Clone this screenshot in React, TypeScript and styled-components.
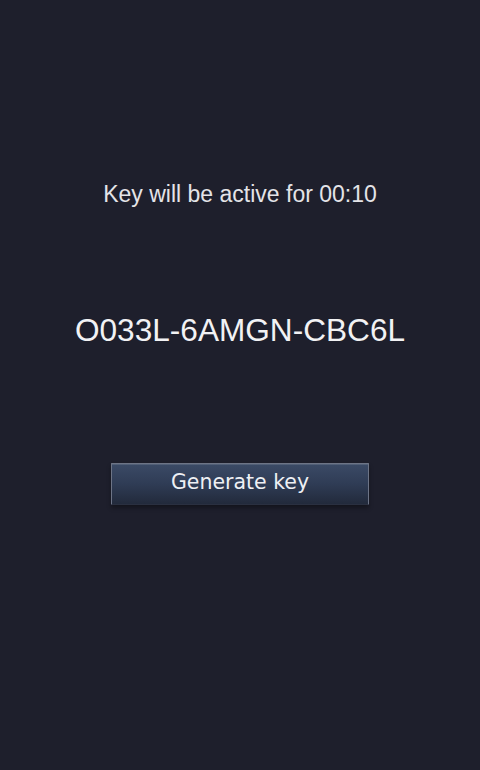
import { useState } from "react";
import styled, { createGlobalStyle } from "styled-components";

const GlobalStyle = createGlobalStyle`
	html, body {
		margin: 0;
		padding: 0;
		background: #1e1f2c;
	}
`;

function randomKey() {
	const chars = "ABCDEFGHIJKLMNOPQRSTUVWXYZ0123456789";
	const part = () =>
		Array.from({ length: 5 }, () => chars[Math.floor(Math.random() * chars.length)]).join("");
	return `${part()}-${part()}-${part()}`;
}

export default function App() {
	const [key, setKey] = useState("O033L-6AMGN-CBC6L");
	const [seconds] = useState(10);

	const mm = String(Math.floor(seconds / 60)).padStart(2, "0");
	const ss = String(seconds % 60).padStart(2, "0");

	return (
		<>
			<GlobalStyle />
			<Screen>
				<Timer>
					Key will be active for {mm}:{ss}
				</Timer>
				<KeyText>{key}</KeyText>
				<GenerateButton onClick={() => setKey(randomKey())}>Generate key</GenerateButton>
			</Screen>
		</>
	);
}

const Screen = styled.div`
	width: 480px;
	height: 770px;
	background: #1e1f2c;
	display: flex;
	flex-direction: column;
	align-items: center;
	padding-top: 180px;
	box-sizing: border-box;
`;

const Timer = styled.div`
	font-family: "Liberation Sans", Arial, sans-serif;
	font-size: 23px;
	color: #e4e4e8;
	line-height: 28px;
`;

const KeyText = styled.div`
	margin-top: 104px;
	font-family: "Liberation Sans", Arial, sans-serif;
	font-size: 31.6px;
	color: #f2f2f4;
	line-height: 36px;
`;

const GenerateButton = styled.button`
	margin-top: 115px;
	width: 258px;
	height: 42px;
	padding: 0 0 4px;
	border: 1px solid #6d7486;
	border-bottom-color: #2a3040;
	border-radius: 1px;
	background: linear-gradient(to bottom, #3b4a66 0%, #2f3c55 50%, #222a3b 100%);
	box-shadow: inset 0 1px 0 rgba(255, 255, 255, 0.12), 0 3px 4px rgba(0, 0, 0, 0.35);
	font-family: "DejaVu Sans", Verdana, sans-serif;
	font-size: 20.5px;
	color: #eef0f4;
	cursor: pointer;
`;
